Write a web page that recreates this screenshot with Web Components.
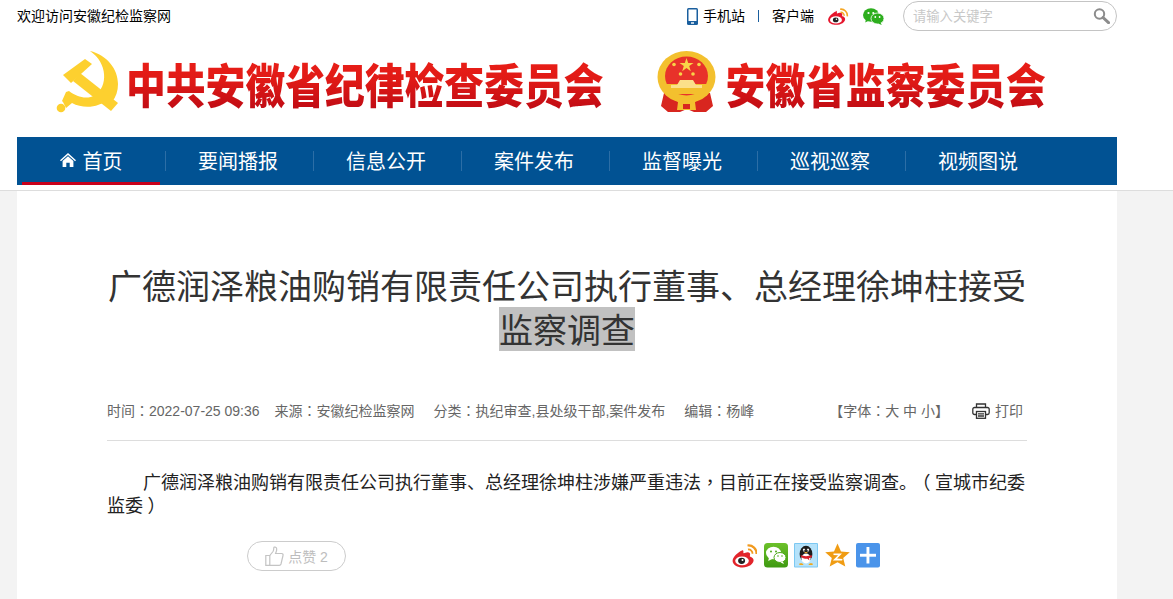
<!DOCTYPE html>
<html lang="zh-CN">
<head>
<meta charset="utf-8">
<title>广德润泽粮油购销有限责任公司执行董事、总经理徐坤柱接受监察调查</title>
<style>
  html, body { margin: 0; padding: 0; height: 100%; overflow: hidden; }
  body {
    background: #f3f3f3;
    font-family: "Liberation Sans", "Noto Sans CJK SC", sans-serif;
    text-spacing-trim: space-all;
  }
</style>
</head>
<body>
<page-header></page-header>
<article-page>
  <span slot="title">广德润泽粮油购销有限责任公司执行董事、总经理徐坤柱接受<mark-text>监察调查</mark-text></span>
</article-page>

<script>
const icons = {
  phone: `<svg width="11" height="17" viewBox="0 0 11 17"><rect width="11" height="17" rx="1.5" fill="#1a5f9e"/><rect x="1.5" y="1.5" width="8" height="11.5" fill="#fff"/><rect x="4" y="14.3" width="3" height="1.4" fill="#fff"/></svg>`,
  weibo: `<svg width="100%" height="100%" viewBox="0 0 24 20"><path d="M9.5 4.2C5.5 5.8.4 10.4.4 14c0 3.6 4.8 5.8 9.4 5.8 6 0 10.6-3.2 10.6-6.6 0-2-1.7-3-3-3.4-.8-.2-.6-.8-.4-1.3.5-1.5-.1-2.9-2.3-2.9-1.3 0-3 .7-3.5.8-.6.1-.6-.3-.5-1 .2-1.6-.6-2.5-1.2-2.2z" fill="#e6162d"/><ellipse cx="9.6" cy="14" rx="7" ry="4.3" fill="#fff"/><ellipse cx="9.3" cy="14" rx="3.3" ry="2.9" fill="#222"/><circle cx="10.2" cy="13.2" r=".9" fill="#fff"/><path d="M14.5 1.4a7.5 7.5 0 0 1 8.4 8.4" fill="none" stroke="#f5a623" stroke-width="1.9"/><path d="M15 5a3.8 3.8 0 0 1 4.2 4.2" fill="none" stroke="#f5a623" stroke-width="1.6"/></svg>`,
  wechat: `<svg width="21" height="17" viewBox="0 0 21 17"><ellipse cx="8" cy="7" rx="8" ry="6.8" fill="#2dae1e"/><path d="M3 11l-.8 3.5 4-2z" fill="#2dae1e"/><ellipse cx="14.5" cy="10.5" rx="6.5" ry="5.5" fill="#2dae1e" stroke="#fff" stroke-width=".8"/><path d="M17.5 14.5l1.3 2.5-3.8-1.5z" fill="#2dae1e"/><circle cx="5.5" cy="5" r="1.1" fill="#fff"/><circle cx="10.3" cy="5" r="1.1" fill="#fff"/><circle cx="12.3" cy="9" r=".9" fill="#fff"/><circle cx="16.6" cy="9" r=".9" fill="#fff"/></svg>`,
  search: `<svg width="17" height="16" viewBox="0 0 17 16"><circle cx="6.5" cy="6" r="4.7" fill="none" stroke="#8c8c8c" stroke-width="2"/><path d="M10 9.5l5.5 5.2" stroke="#8c8c8c" stroke-width="3" stroke-linecap="round"/></svg>`,
  home: `<svg width="16" height="14" viewBox="0 0 16 14"><path d="M8 0L0 7.3l1 .9L8 2l7 6.2 1-.9z" fill="#fff"/><path d="M2.6 8L8 3.3 13.4 8v6H9.7V9.8H6.3V14H2.6z" fill="#fff"/></svg>`,
  print: `<svg width="18" height="16" viewBox="0 0 18 16" fill="none" stroke="#333" stroke-width="1.3"><path d="M4.5 4.5V1h9v3.5"/><path d="M4.5 11.5H2.5a1.7 1.7 0 0 1-1.7-1.7V6.2a1.7 1.7 0 0 1 1.7-1.7h13a1.7 1.7 0 0 1 1.7 1.7v3.6a1.7 1.7 0 0 1-1.7 1.7h-2"/><rect x="4.5" y="8.5" width="9" height="6.8"/><path d="M6 10.8h6M6 13h6"/></svg>`,
  thumb: `<svg width="19" height="20" viewBox="0 0 19 20" fill="none" stroke="#c4c4c4" stroke-width="1.2"><path d="M.8 9.5h4v9.8h-4z"/><path d="M4.8 9.5L8 5.5c.8-1.2.8-2.5.8-3.8 0-1 2.7-1 2.9 1 .2 1.6-.7 3.7-1.1 4.8h6c1.3 0 1.7 1.1 1.4 2l-2 8.5c-.3 1-.9 1.3-1.8 1.3H4.8"/></svg>`,
  shareWeibo: `<svg width="25" height="25" viewBox="0 0 25 25"><path d="M10 7.5C5.5 9.5.6 14 .6 18c0 3.8 5 6.5 10 6.5 6.4 0 11-3.7 11-7.2 0-2.1-1.8-3.2-3.2-3.6-.8-.2-.6-.9-.4-1.4.5-1.6-.1-3-2.5-3-1.3 0-3 .8-3.6.9-.6.1-.6-.4-.5-1.1.2-1.7-.6-2.4-1.4-1.6z" fill="#e2242b"/><ellipse cx="10" cy="17.8" rx="6.8" ry="4.4" fill="#fff"/><ellipse cx="9.6" cy="17.8" rx="3.5" ry="3.1" fill="#222"/><circle cx="10.5" cy="17" r="1" fill="#fff"/><path d="M15.5 2.5a8 8 0 0 1 9 8.5" fill="none" stroke="#f19a1f" stroke-width="2.2"/><path d="M16 6.5a4 4 0 0 1 4.5 4.3" fill="none" stroke="#f19a1f" stroke-width="1.8"/></svg>`,
  shareWechat: `<svg width="24" height="25" viewBox="0 0 24 25"><defs><linearGradient id="wg" x1="0" y1="0" x2="0" y2="1"><stop offset="0" stop-color="#6cc12a"/><stop offset="1" stop-color="#3f9a12"/></linearGradient></defs><rect width="24" height="24.5" rx="3.5" fill="url(#wg)"/><ellipse cx="9.5" cy="10" rx="7.5" ry="6.3" fill="#fff"/><path d="M5 14.5l-.8 3.5 4-2z" fill="#fff"/><ellipse cx="16" cy="14.5" rx="6" ry="5" fill="#fff" stroke="#4ea81a" stroke-width="1"/><path d="M18.8 18.5l1.2 2.5-3.5-1.5z" fill="#fff"/><circle cx="7" cy="8.5" r="1" fill="#4ea81a"/><circle cx="12" cy="8.5" r="1" fill="#4ea81a"/><circle cx="14" cy="13" r=".8" fill="#4ea81a"/><circle cx="18" cy="13" r=".8" fill="#4ea81a"/></svg>`,
  shareQq: `<svg width="24" height="25" viewBox="0 0 24 25"><rect width="24" height="24.5" rx="1" fill="#7cc8f2"/><rect x="1" y="1" width="22" height="22.5" fill="#b5e2fa"/><ellipse cx="12" cy="11" rx="6.4" ry="8.2" fill="#1c1c1c"/><ellipse cx="12" cy="15.5" rx="4.6" ry="5" fill="#fff"/><ellipse cx="10" cy="7" rx="1.2" ry="1.6" fill="#fff"/><ellipse cx="14" cy="7" rx="1.2" ry="1.6" fill="#fff"/><circle cx="10.2" cy="7.3" r=".6" fill="#111"/><circle cx="13.8" cy="7.3" r=".6" fill="#111"/><path d="M10 9h4l-2 1.5z" fill="#f0a81c"/><path d="M6.5 12c3 1.5 8 1.5 11 0l.5 2c-1 .7-2 1-3 1.2l.4 2.3-2-1.8c-1.5.2-3.8.1-5.9-1.5z" fill="#d9202a"/><path d="M5.5 20.5c2-.8 3.5-.3 4 1.5H6c-1 0-1.2-.9-.5-1.5zM18.5 20.5c-2-.8-3.5-.3-4 1.5H18c1 0 1.2-.9.5-1.5z" fill="#f0a81c"/></svg>`,
  shareQzone: `<svg width="25" height="25" viewBox="0 0 25 25"><path d="M12.5.5l3.5 8 8.8.8-6.6 5.7 2.1 8.5-7.8-4.3-7.8 4.3 2.1-8.5L.2 9.3l8.8-.8z" fill="#f09c13"/><path d="M8.5 10.5H17l-5 5 5.5.4-.4 1.6H7.8l5.3-5.3-4.6-.2z" fill="#fff"/></svg>`,
  sharePlus: `<svg width="24" height="25" viewBox="0 0 24 25"><rect width="24" height="24.5" rx="2" fill="#4a94ea"/><rect x="4" y="10.8" width="16" height="2.9" fill="#fff"/><rect x="10.5" y="4" width="2.9" height="16.5" fill="#fff"/></svg>`,
};

// draws one icon from the table above
class AppIcon extends HTMLElement {
  constructor() {
    super();
    this.attachShadow({ mode: "open" });
  }
  connectedCallback() {
    this.shadowRoot.innerHTML = `
      <style>:host { display: block; line-height: 0; flex: none; }</style>
      ${ icons[this.getAttribute("name")] }`;
  }
}
customElements.define("app-icon", AppIcon);

// the grey highlighted part of the headline
class MarkText extends HTMLElement {
  constructor() {
    super();
    this.attachShadow({ mode: "open" }).innerHTML = `
      <style>:host { display: inline-block; background: #c1c1c1; }</style>
      <slot></slot>`;
  }
}
customElements.define("mark-text", MarkText);

const topBarTemplate = document.createElement("template");
topBarTemplate.innerHTML = `
  <style>
    :host { display: flex; align-items: center; height: 32px; font-size: 14px; color: #000; }
    .links { margin-left: auto; display: flex; align-items: center; }
    .txt { padding-bottom: 2px; }
    .label { margin-left: 5px; }
    .sep { width: 1px; height: 12px; background: #1a5f9e; margin: 0 13px; }
    .weibo { width: 22px; height: 17px; margin-left: 13px; }
    .wechat { margin-left: 14px; }
    .search {
      box-sizing: border-box; width: 214px; height: 30px; margin-left: 19px;
      border: 1px solid #c4c4c4; border-radius: 15px;
      display: flex; align-items: center; padding: 0 6px 0 9px;
      color: #c8c8c8; font-size: 13.3px;
    }
    .search span { flex: 1; }
  </style>
  <span class="txt">欢迎访问安徽纪检监察网</span>
  <div class="links">
    <app-icon name="phone"></app-icon>
    <span class="txt label">手机站</span>
    <i class="sep"></i>
    <span class="txt">客户端</span>
    <app-icon class="weibo" name="weibo"></app-icon>
    <app-icon class="wechat" name="wechat"></app-icon>
    <div class="search"><span class="txt">请输入关键字</span><app-icon name="search"></app-icon></div>
  </div>
`;
class TopBar extends HTMLElement {
  constructor() {
    super();
    this.attachShadow({ mode: "open" }).appendChild(topBarTemplate.content.cloneNode(true));
  }
}
customElements.define("top-bar", TopBar);

const logoBannerTemplate = document.createElement("template");
logoBannerTemplate.innerHTML = `
  <style>
    :host { display: flex; align-items: center; height: 105px; padding-left: 33px; }
    .name {
      font: 900 39.8px/50px "Noto Sans CJK SC", sans-serif;
      background: linear-gradient(#ec2018, #e01a16 45%, #bd0a14);
      -webkit-background-clip: text; background-clip: text; color: transparent;
      white-space: nowrap; transform: scaleY(1.18); margin-bottom: 3px;
    }
    .party { margin: 0 0 5px 5px; display: block; flex: none; }
    .first { margin-left: 6px; }
    .state { margin: 0 0 4px 53px; display: block; flex: none; }
    .second { margin-left: 9px; letter-spacing: .25px; }
  </style>
  <svg class="party" width="65" height="64" viewBox="55 50 65 64">
    <g fill="#fdd02f">
      <path d="M90 51c17 4 28 18 28 33 0 7-2 13-6 18l-4-3c-9 9-25 10-36 4l-6 5-3-6-1-1 4-9 3-1c8 6 18 9 26 4 13-8 13-32-5-44z"/>
      <circle cx="61" cy="108" r="4.3"/>
      <path d="M63 75l22-16 7 5-21 19z"/>
      <path d="M80 73l38 30-7 8-38-30z"/>
    </g>
  </svg>
  <span class="name first">中共安徽省纪律检查委员会</span>
  <svg class="state" width="60" height="63" viewBox="0 0 60 63">
    <path d="M7 42h46l3 13-7 6H37l-7-3-7 3H11l-7-6z" fill="#d8261f"/>
    <ellipse cx="29.5" cy="26" rx="29" ry="26" fill="#f3c02e"/>
    <ellipse cx="29.5" cy="25" rx="21.5" ry="19.5" fill="#e8322a"/>
    <path d="M9 33h41c-2 5-5 8-9 10H18c-4-2-7-5-9-10z" fill="#f3c02e"/>
    <path d="M14 37v-3h6l3-5h13l3 5h6v3z" fill="#fbe08a"/>
    <path d="M29.5 7l1.7 5h5.3l-4.3 3.1 1.6 5.1-4.3-3.1-4.3 3.1 1.6-5.1-4.3-3.1h5.3z" fill="#f8d448"/>
    <g fill="#f8d448"><circle cx="17" cy="13.5" r="1.8"/><circle cx="42" cy="13.5" r="1.8"/><circle cx="23.5" cy="23" r="1.8"/><circle cx="36" cy="23" r="1.8"/></g>
    <path d="M18 45c4 4 19 4 23 0l2 3-5 3 1 8H20l1-8-5-3z" fill="#f3c02e"/>
    <path d="M26 53h7v5h-7z" fill="#d8261f"/>
  </svg>
  <span class="name second">安徽省监察委员会</span>
`;
class LogoBanner extends HTMLElement {
  constructor() {
    super();
    this.attachShadow({ mode: "open" }).appendChild(logoBannerTemplate.content.cloneNode(true));
  }
}
customElements.define("logo-banner", LogoBanner);

const navItems = ["要闻播报", "信息公开", "案件发布", "监督曝光", "巡视巡察", "视频图说"];

class MainNav extends HTMLElement {
  constructor() {
    super();
    this.attachShadow({ mode: "open" }).innerHTML = `
      <style>
        :host { display: flex; height: 48px; background: #015293; color: #fff; font-size: 20px; }
        a {
          box-sizing: border-box; padding: 0 2px 2px 0;
          position: relative; width: 148px; display: flex; align-items: center; justify-content: center; gap: 7px;
          background: linear-gradient(#2c6ea6, #2c6ea6) left 14px / 1px 20px no-repeat;
        }
        a:first-of-type { background: none; padding-right: 0; }
        a:first-of-type::after {
          content: ""; position: absolute; left: 5px; right: 5px; bottom: 0; height: 3px; background: #c8001b;
        }
      </style>
      <a><app-icon name="home"></app-icon>首页</a>
      ${ navItems.map(text => `<a>${ text }</a>`).join("") }`;
  }
}
customElements.define("main-nav", MainNav);

class PageHeader extends HTMLElement {
  constructor() {
    super();
    this.attachShadow({ mode: "open" }).innerHTML = `
      <style>
        :host { display: block; background: #fff; border-bottom: 1px solid #ddd; height: 190px; }
        .wrap { width: 1100px; margin-left: 17px; }
      </style>
      <div class="wrap">
        <top-bar></top-bar>
        <logo-banner></logo-banner>
        <main-nav></main-nav>
      </div>`;
  }
}
customElements.define("page-header", PageHeader);

const articleMetaTemplate = document.createElement("template");
articleMetaTemplate.innerHTML = `
  <style>
    :host {
      display: flex; align-items: center; height: 20px; padding-bottom: 20px;
      border-bottom: 1px solid #ddd; font-size: 14px; color: #666; white-space: nowrap;
    }
    b { font-weight: normal; font-family: "Noto Sans CJK TC", sans-serif; }
    .time { margin-right: 15px; }
    .from { margin-right: 19px; }
    .type { margin-right: 19px; }
    .tools { margin-left: auto; margin-right: 4px; display: flex; align-items: center; }
    .print { margin: 2px 5px 0 23px; }
  </style>
  <span class="time">时间<b lang="zh-TW">：</b>2022-07-25 09:36</span>
  <span class="from">来源<b lang="zh-TW">：</b>安徽纪检监察网</span>
  <span class="type">分类<b lang="zh-TW">：</b>执纪审查,县处级干部,案件发布</span>
  <span>编辑<b lang="zh-TW">：</b>杨峰</span>
  <div class="tools">
    <span>【字体<b lang="zh-TW">：</b>大 中 小】</span>
    <app-icon class="print" name="print"></app-icon>
    <span>打印</span>
  </div>
`;
class ArticleMeta extends HTMLElement {
  constructor() {
    super();
    this.attachShadow({ mode: "open" }).appendChild(articleMetaTemplate.content.cloneNode(true));
  }
}
customElements.define("article-meta", ArticleMeta);

class LikeButton extends HTMLElement {
  constructor() {
    super();
    this.attachShadow({ mode: "open" }).innerHTML = `
      <style>
        :host {
          box-sizing: border-box; width: 99px; height: 30px; flex: none;
          display: flex; align-items: center; justify-content: center; gap: 4px;
          border: 1px solid #ccc; border-radius: 15px; color: #bdbdbd; font-size: 14px;
        }
      </style>
      <app-icon name="thumb"></app-icon><slot></slot>`;
  }
}
customElements.define("like-button", LikeButton);

class ShareBar extends HTMLElement {
  constructor() {
    super();
    this.attachShadow({ mode: "open" }).innerHTML = `
      <style>
        :host { display: flex; align-items: center; gap: 6.5px; height: 28px; margin-bottom: 2px; }
      </style>
      <app-icon name="shareWeibo"></app-icon>
      <app-icon name="shareWechat"></app-icon>
      <app-icon name="shareQq"></app-icon>
      <app-icon name="shareQzone"></app-icon>
      <app-icon name="sharePlus"></app-icon>`;
  }
}
customElements.define("share-bar", ShareBar);

const articlePageTemplate = document.createElement("template");
articlePageTemplate.innerHTML = `
  <style>
    :host {
      display: block; box-sizing: border-box; width: 1100px; height: 409px; margin-left: 17px;
      padding: 72px 90px 0; background: #fff; overflow: hidden;
    }
    h1 {
      margin: 0 0 49px; font-size: 34px; line-height: 44px; font-weight: normal;
      color: #333; text-align: center; font-family: "Noto Sans CJK SC", sans-serif;
    }
    p {
      margin: 29px 0 25px; font: 18px/23px "Noto Sans CJK SC", sans-serif; color: #222; text-indent: 2em;
    }
    b { font-weight: normal; font-family: "Noto Sans CJK TC", sans-serif; }
    /* half width paren with the space put back on the other side, so it sits centred */
    .open { font-feature-settings: "halt"; padding: 0 0 0 4.5px; margin-right: 4.5px; }
    .close { font-feature-settings: "halt"; padding-left: 4.5px; }
    .actions { display: flex; align-items: center; padding-left: 140px; gap: 386px; }
  </style>
  <h1><slot name="title"></slot></h1>
  <article-meta></article-meta>
  <p>广德润泽粮油购销有限责任公司执行董事、总经理徐坤柱涉嫌严重违法<b lang="zh-TW">，</b>目前正在接受监察调查。<b class="open" lang="zh-TW">（</b>宣城市纪委<span>监委<b class="close" lang="zh-TW">）</b></span></p>
  <div class="actions">
    <like-button>点赞 2</like-button>
    <share-bar></share-bar>
  </div>
`;
class ArticlePage extends HTMLElement {
  constructor() {
    super();
    this.attachShadow({ mode: "open" }).appendChild(articlePageTemplate.content.cloneNode(true));
  }
}
customElements.define("article-page", ArticlePage);
</script>
</body>
</html>
